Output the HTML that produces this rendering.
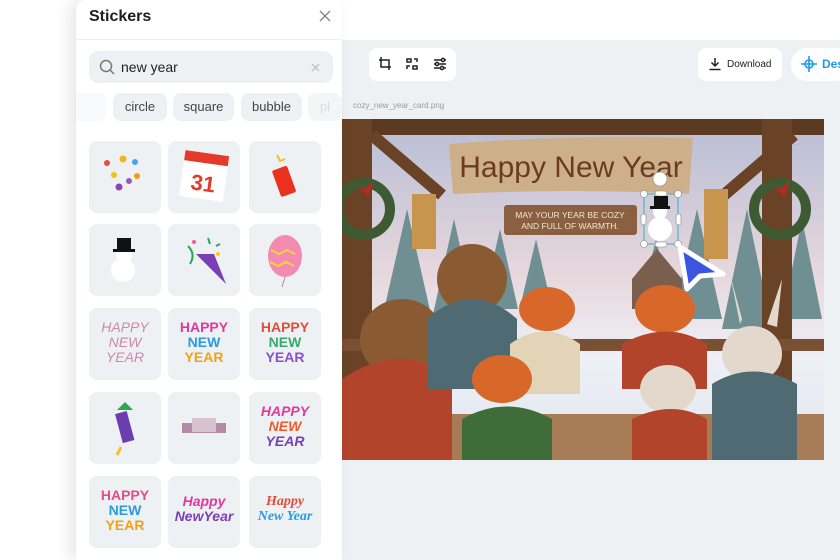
<!DOCTYPE html>
<html><head><meta charset="utf-8">
<style>
*{margin:0;padding:0;box-sizing:border-box}
body{width:840px;height:560px;overflow:hidden;background:#fff;font-family:"Liberation Sans",sans-serif;position:relative}
.main{position:absolute;left:342px;top:40px;width:498px;height:520px;background:#eef1f4}
.panel{position:absolute;left:76px;top:0;width:266px;height:560px;background:#fff;border-radius:10px 10px 0 0;box-shadow:-6px 0 16px rgba(0,0,0,.10)}
.title{position:absolute;left:13px;top:8px;font-size:16px;font-weight:bold;color:#1d1d1f}
.hr{position:absolute;left:0;top:39px;width:266px;height:1px;background:#eceef1}
.search{position:absolute;left:13px;top:51px;width:244px;height:32px;background:#eef1f4;border-radius:9px}
.search span{position:absolute;left:32px;top:8px;font-size:14px;color:#222}
.chip{position:absolute;top:93px;height:28px;background:#eef1f4;border-radius:8px;font-size:13px;color:#444;line-height:28px;text-align:center}
.tile{position:absolute;width:72px;height:72px;background:#eef1f4;border-radius:8px;overflow:hidden}
.hny{position:absolute;left:0;top:12px;width:72px;text-align:center;font-weight:bold;font-size:14px;line-height:15px}
.tb{position:absolute;top:48px;height:33px;background:#fff;border-radius:8px}
</style></head><body>
<div class="main"></div>
<div class="tb" style="left:369px;width:87px"></div>
<svg style="position:absolute;left:378px;top:56px" width="72" height="16" viewBox="0 0 72 16" fill="none" stroke="#222" stroke-width="1.5">
<path d="M3 1v10h10M1 4h10v10"/>
<rect x="29" y="3" width="4" height="3"/><rect x="35" y="10" width="4" height="3"/><path d="M36 3h3v3M32 10h-3v3"/>
<path d="M56 4h12M56 8h12M56 12h12"/><circle cx="65" cy="4" r="1.6" fill="#fff"/><circle cx="59" cy="8" r="1.6" fill="#fff"/><circle cx="64" cy="12" r="1.6" fill="#fff"/>
</svg>
<div class="tb" style="left:698px;width:84px"></div>
<svg style="position:absolute;left:708px;top:57px" width="14" height="14" viewBox="0 0 14 14" fill="none" stroke="#222" stroke-width="1.5"><path d="M7 1v8M3.5 5.5L7 9l3.5-3.5M1.5 12.5h11"/></svg>
<div style="position:absolute;left:727px;top:59px;font-size:10px;color:#222">Download</div>
<div class="tb" style="left:791px;width:60px;border-radius:16px"></div>
<svg style="position:absolute;left:800px;top:55px" width="18" height="18" viewBox="0 0 18 18" fill="none" stroke="#1e9be8" stroke-width="1.6"><circle cx="9" cy="9" r="4"/><path d="M9 1v16M1 9h16"/></svg>
<div style="position:absolute;left:822px;top:57px;font-size:12px;font-weight:bold;color:#1e9be8">Des</div>
<div style="position:absolute;left:353px;top:101px;font-size:8px;color:#999">cozy_new_year_card.png</div>

<svg style="position:absolute;left:342px;top:119px" width="482" height="341" viewBox="0 0 482 341">
<defs><linearGradient id="sky" x1="0" y1="0" x2="0" y2="1"><stop offset="0" stop-color="#b7bdd6"/><stop offset=".45" stop-color="#e6d7dc"/><stop offset=".7" stop-color="#eef0f6"/><stop offset="1" stop-color="#dfe5ee"/></linearGradient></defs>
<rect width="482" height="341" fill="url(#sky)"/>
<g fill="#6f8f92"><path d="M40 200l25-110 25 110z"/><path d="M90 200l22-100 22 100z"/><path d="M140 190l18-80 18 80z"/><path d="M330 200l25-110 25 110z"/><path d="M380 210l25-120 25 120z"/><path d="M440 200l20-100 20 100z"/><path d="M180 180l14-60 14 60zM300 180l14-60 14 60z"/></g>
<path d="M290 160l25-30 25 30v30h-50z" fill="#7a5e4e"/>
<rect x="0" y="0" width="482" height="16" fill="#5c3a22"/>
<path d="M30 16l70 60M452 16l-70 60" stroke="#6a4327" stroke-width="12"/>
<rect x="0" y="0" width="30" height="341" fill="#6a4327"/><rect x="420" y="0" width="30" height="341" fill="#6a4327"/>
<path d="M107 25q122 -10 244 -6l-4 56q-118 -6 -236 0z" fill="#cdb08a"/>
<text x="229" y="58" text-anchor="middle" font-family="Liberation Sans" font-size="30" fill="#6b3a22">Happy New Year</text>
<rect x="162" y="86" width="133" height="30" rx="3" fill="#8b6040"/>
<text x="228" y="99" text-anchor="middle" font-size="8.5" fill="#f2e6d2">MAY YOUR YEAR BE COZY</text>
<text x="228" y="110" text-anchor="middle" font-size="8.5" fill="#f2e6d2">AND FULL OF WARMTH.</text>
<circle cx="22" cy="90" r="26" fill="none" stroke="#3d5a33" stroke-width="10"/><circle cx="438" cy="90" r="26" fill="none" stroke="#3d5a33" stroke-width="10"/>
<path d="M12 62l10 8 10-8-6 16M428 62l10 8 10-8-6 16" fill="#b52a22"/>
<g fill="#c8954f"><rect x="70" y="75" width="24" height="55"/><rect x="362" y="70" width="24" height="70"/></g>
<rect x="0" y="220" width="482" height="12" fill="#7a5034"/>
<rect x="0" y="295" width="482" height="46" fill="#a67b55"/>
<ellipse cx="60" cy="220" rx="42" ry="40" fill="#8a5a33"/><path d="M0 260q60-40 110 0v81H0z" fill="#b3442c"/>
<ellipse cx="130" cy="160" rx="35" ry="35" fill="#8a5a33"/><path d="M85 200q45-40 90 0v70H85z" fill="#4f6a72"/>
<ellipse cx="205" cy="190" rx="28" ry="22" fill="#d8682a"/><path d="M168 225q35-25 70 0v50h-70z" fill="#e3d4b8"/>
<ellipse cx="160" cy="260" rx="30" ry="24" fill="#d8682a"/><path d="M120 300q45-25 90 0v41h-90z" fill="#3f6d3a"/>
<ellipse cx="323" cy="190" rx="30" ry="24" fill="#d8682a"/><path d="M280 225q45-25 85 0v45h-85z" fill="#b3442c"/>
<ellipse cx="326" cy="270" rx="28" ry="24" fill="#e3d8cc"/><path d="M290 300q40-20 75 0v41h-75z" fill="#b3442c"/>
<ellipse cx="410" cy="235" rx="30" ry="28" fill="#e3d8cc"/><path d="M370 265q40-25 85 0v76h-85z" fill="#4f6a72"/>
<path d="M398 205l-10-50 12 45M425 205l15-45-5 48" fill="#e3d8cc"/>
<rect x="302" y="75" width="34" height="50" fill="none" stroke="#2bb3c8" stroke-width="1"/>
<g fill="#fff" stroke="#888" stroke-width=".6"><circle cx="302" cy="75" r="3.5"/><circle cx="336" cy="75" r="3.5"/><circle cx="302" cy="125" r="3.5"/><circle cx="336" cy="125" r="3.5"/><rect x="313" y="72" width="12" height="5" rx="2.5"/><rect x="313" y="123" width="12" height="5" rx="2.5"/><rect x="299" y="95" width="5" height="11" rx="2.5"/><rect x="334" y="95" width="5" height="11" rx="2.5"/><circle cx="318" cy="60" r="7"/></g>
<ellipse cx="318" cy="110" rx="12" ry="12" fill="#fff"/><circle cx="318" cy="93" r="7" fill="#fff"/><rect x="312" y="77" width="14" height="11" fill="#111"/><rect x="308" y="87" width="20" height="3" fill="#111"/>
</svg>
<svg style="position:absolute;left:0;top:0" width="840" height="560"><path d="M680 247L687 289L700 276L723 274Z" fill="#3b55e0" stroke="#fff" stroke-width="5" stroke-linejoin="round"/></svg>

<div class="panel">
<div class="title">Stickers</div>
<svg style="position:absolute;left:243px;top:10px" width="12" height="12" viewBox="0 0 12 12" stroke="#888" stroke-width="1.4"><path d="M1 1l10 10M11 1L1 11"/></svg>
<div class="hr"></div>
<div class="search"><svg style="position:absolute;left:10px;top:8px" width="16" height="16" viewBox="0 0 16 16" fill="none" stroke="#777" stroke-width="1.5"><circle cx="7" cy="7" r="5.5"/><path d="M11 11l4 4"/></svg><span>new year</span>
<svg style="position:absolute;left:222px;top:12px" width="9" height="9" viewBox="0 0 9 9" stroke="#bbb" stroke-width="1.2"><path d="M1 1l7 7M8 1L1 8"/></svg></div>
<div class="chip" style="left:0;width:30px;opacity:.4;border-radius:0 8px 8px 0"></div>
<div class="chip" style="left:37px;width:54px">circle</div>
<div class="chip" style="left:97px;width:61px">square</div>
<div class="chip" style="left:165px;width:61px">bubble</div>
<div class="chip" style="left:232px;width:34px;color:#ccc;text-align:left;padding-left:12px;opacity:.7">pl</div>

<div class="tile" style="left:13px;top:141px"><svg width="72" height="72"><circle cx="18" cy="22" r="3" fill="#e94b3c"/><circle cx="34" cy="18" r="3.5" fill="#f3b51a"/><circle cx="46" cy="21" r="3" fill="#4aa3df"/><circle cx="25" cy="34" r="3" fill="#f1c40f"/><circle cx="48" cy="35" r="3" fill="#f39c12"/><circle cx="40" cy="40" r="3" fill="#9b59b6"/><circle cx="30" cy="46" r="3.5" fill="#8e44ad"/></svg></div>
<div class="tile" style="left:92px;top:141px"><svg width="72" height="72"><rect x="14" y="14" width="44" height="44" fill="#fff" transform="rotate(8 36 36)"/><rect x="14" y="12" width="44" height="10" fill="#e43a2c" transform="rotate(8 36 36)"/><text x="36" y="50" text-anchor="middle" font-size="22" font-weight="bold" fill="#e43a2c" transform="rotate(8 36 36)">31</text></svg></div>
<div class="tile" style="left:173px;top:141px"><svg width="72" height="72"><rect x="27" y="26" width="16" height="28" rx="2" fill="#e8321e" transform="rotate(-20 36 40)"/><path d="M28 14l3 6 5-2" stroke="#f3c21a" stroke-width="2" fill="none"/></svg></div>
<div class="tile" style="left:13px;top:224px"><svg width="72" height="72"><circle cx="34" cy="46" r="12" fill="#fff"/><circle cx="35" cy="31" r="8" fill="#fff"/><rect x="28" y="14" width="14" height="12" fill="#111"/><rect x="24" y="25" width="22" height="3" fill="#111"/></svg></div>
<div class="tile" style="left:92px;top:224px"><svg width="72" height="72"><path d="M28 30l30 30-12-30z" fill="#7b3fb5"/><path d="M20 22q8 8 2 18M40 14l2 6M48 22l4-2" stroke="#2ca84c" stroke-width="2" fill="none"/><circle cx="26" cy="18" r="2" fill="#f5a"/><circle cx="50" cy="30" r="2" fill="#fc0"/></svg></div>
<div class="tile" style="left:173px;top:224px"><svg width="72" height="72"><ellipse cx="36" cy="32" rx="17" ry="21" fill="#f28ab2"/><path d="M22 26l8 4 8-4 8 4M21 38l8 4 8-4 8 4" stroke="#f7d23c" stroke-width="2" fill="none"/><path d="M36 53l-3 10" stroke="#999"/></svg></div>
<div class="tile" style="left:13px;top:308px"><div class="hny" style="color:#c8a;font-weight:normal;font-style:italic">HAPPY<br>NEW<br>YEAR</div></div>
<div class="tile" style="left:92px;top:308px"><div class="hny" style="color:#e2379e">HAPPY<br><span style="color:#2b9be0">NEW</span><br><span style="color:#f2a018">YEAR</span></div></div>
<div class="tile" style="left:173px;top:308px"><div class="hny" style="color:#e24d3a">HAPPY<br><span style="color:#3aa86a">NEW</span><br><span style="color:#8a4fcf">YEAR</span></div></div>
<div class="tile" style="left:13px;top:392px"><svg width="72" height="72"><rect x="30" y="20" width="12" height="30" fill="#6a3eb0" transform="rotate(-15 36 36)"/><path d="M28 18l8-8 8 8z" fill="#2ea84c"/><path d="M32 55l-4 8" stroke="#f3c21a" stroke-width="3"/></svg></div>
<div class="tile" style="left:92px;top:392px"><svg width="72" height="72"><rect x="14" y="31" width="44" height="10" fill="#b58aa8"/><rect x="24" y="26" width="24" height="14" fill="#d9c2cf"/></svg></div>
<div class="tile" style="left:173px;top:392px"><div class="hny" style="color:#e2379e;font-style:italic">HAPPY<br><span style="color:#f05a28">NEW</span><br><span style="color:#7b3fb5">YEAR</span></div></div>
<div class="tile" style="left:13px;top:476px"><div class="hny" style="color:#e24d8a">HAPPY<br><span style="color:#2b9be0">NEW</span><br><span style="color:#f2a018">YEAR</span></div></div>
<div class="tile" style="left:92px;top:476px"><div class="hny" style="color:#e2379e;font-style:italic;top:18px">Happy<br><span style="color:#7b3fb5">NewYear</span></div></div>
<div class="tile" style="left:173px;top:476px"><div class="hny" style="color:#e24d3a;font-style:italic;top:18px;font-family:'Liberation Serif',serif">Happy<br><span style="color:#2b9be0">New Year</span></div></div>
</div>
</body></html>
